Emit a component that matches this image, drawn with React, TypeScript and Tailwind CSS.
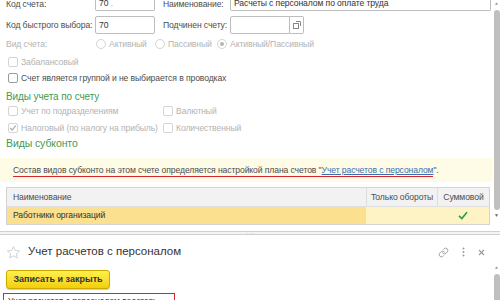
import React from 'react';

const Check = ({ checked = false, disabled = false }: { checked?: boolean; disabled?: boolean }) => (
  <span
    className={`flex h-[10px] w-[10px] shrink-0 items-center justify-center rounded-[2px] border bg-white ${
      disabled ? 'border-[#d4d4d4]' : 'border-[#9a9a9a]'
    }`}
  >
    {checked && (
      <svg width="8" height="8" viewBox="0 0 9 9">
        <path d="M1.5 4.5 L3.6 6.8 L7.6 1.8" fill="none" stroke="#a8a8a8" strokeWidth="1.3" />
      </svg>
    )}
  </span>
);

const Radio = ({ on = false }: { on?: boolean }) => (
  <span className="flex h-[10px] w-[10px] shrink-0 items-center justify-center rounded-full border border-[#d4d4d4] bg-white">
    {on && <span className="h-[4px] w-[4px] rounded-full bg-[#b5b5b5]" />}
  </span>
);

const App = () => {
  return (
    <div
      className="flex h-[300px] w-[500px] flex-col overflow-hidden whitespace-nowrap bg-white text-[8.6px] tracking-[-0.1px] text-[#4d4d4d]"
      style={{ fontFamily: '"Liberation Sans", Arial, sans-serif' }}
    >
      {/* Top pane */}
      <div className="flex h-[231px] shrink-0">
        <div className="flex w-[493px] flex-col">
          <div className="-mt-[3px] flex flex-col pl-[6px]">
            {/* Row 1 */}
            <div className="flex h-[14px] items-center">
              <span className="w-[89px]">Код счета:</span>
              <div className="flex h-full w-[60px] items-center rounded-b-[2px] border border-t-0 border-[#bdbdbd] px-[3px] text-[#333]">
                70<span className="text-[#bbb]">&nbsp;.</span>
              </div>
              <span className="ml-[8px] w-[67px]">Наименование:</span>
              <div className="flex h-full w-[261px] items-center rounded-b-[2px] border border-t-0 border-[#bdbdbd] px-[3px] text-[#333]">
                Расчеты с персоналом по оплате труда
              </div>
            </div>
            {/* Row 2 */}
            <div className="mt-[5px] flex h-[18px] items-center">
              <span className="w-[89px]">Код быстрого выбора:</span>
              <div className="flex h-full w-[60px] items-center rounded-[2px] border border-[#bdbdbd] px-[3px] text-[#333]">
                70
              </div>
              <span className="ml-[8px] w-[67px]">Подчинен счету:</span>
              <div className="flex h-full w-[60px] rounded-l-[2px] border border-[#bdbdbd]" />
              <div className="flex h-full w-[14px] items-center justify-center rounded-r-[2px] border border-l-0 border-[#bdbdbd]">
                <svg width="8" height="8" viewBox="0 0 8 8">
                  <rect x="0.5" y="2.5" width="5" height="5" fill="none" stroke="#888" />
                  <path d="M3 0.5 H7.5 V5" fill="none" stroke="#888" />
                </svg>
              </div>
            </div>
            {/* Row 3 */}
            <div className="mt-[3px] flex h-[14px] items-center text-[#b3b3b3]">
              <span className="w-[90px]">Вид счета:</span>
              <span className="flex w-[59px] items-center gap-[3px]">
                <Radio /> Активный
              </span>
              <span className="flex w-[62px] items-center gap-[3px]">
                <Radio /> Пассивный
              </span>
              <span className="flex items-center gap-[3px]">
                <Radio on /> Активный/Пассивный
              </span>
            </div>
            {/* Checkboxes */}
            <div className="mt-[4px] flex h-[14px] items-center gap-[3px] pl-[2px] text-[#b3b3b3]">
              <Check disabled /> Забалансовый
            </div>
            <div className="mt-[2px] flex h-[14px] items-center gap-[3px] pl-[2px] text-[#4d4d4d]">
              <Check /> Счет является группой и не выбирается в проводках
            </div>
            <div className="mt-[4px] flex h-[14px] items-center text-[10px] text-[#3f9a55]">Виды учета по счету</div>
            <div className="mt-[1px] flex h-[14px] items-center pl-[2px] text-[#b3b3b3]">
              <span className="flex w-[155px] items-center gap-[3px]">
                <Check disabled /> Учет по подразделениям
              </span>
              <span className="flex items-center gap-[3px]">
                <Check disabled /> Валютный
              </span>
            </div>
            <div className="mt-[3px] flex h-[14px] items-center pl-[2px] text-[#b3b3b3]">
              <span className="flex w-[155px] items-center gap-[3px]">
                <Check checked disabled /> Налоговый (по налогу на прибыль)
              </span>
              <span className="flex items-center gap-[3px]">
                <Check disabled /> Количественный
              </span>
            </div>
            <div className="mt-[2px] flex h-[14px] items-center text-[10.5px] text-[#3f9a55]">Виды субконто</div>
          </div>

          {/* Info banner */}
          <div className="mt-[7px] flex h-[24px] items-center bg-[#fefbe6] pl-[13px] pt-[1px] text-[#4d4d4d]">
            <span className="border-b-[1.5px] border-[#d4262b] leading-[11px]">
              Состав видов субконто на этом счете определяется настройкой плана счетов "
              <span className="text-[#3b6fb0] underline">Учет расчетов с персоналом</span>
            </span>
            <span>".</span>
          </div>

          {/* Table */}
          <div className="ml-[6px] mt-[5px] flex w-[484px] flex-col border border-[#d4d4d4]">
            <div className="flex h-[19px] border-b border-[#dedede] bg-[#f2f2f2]">
              <div className="flex flex-1 items-center pl-[6px]">Наименование</div>
              <div className="flex w-[71px] items-center justify-center border-l border-[#dedede]">Только обороты</div>
              <div className="flex w-[52px] items-center justify-center border-l border-[#dedede]">Суммовой</div>
            </div>
            <div className="flex h-[17px]">
              <div className="flex flex-1 items-center bg-[#fbe08f] pl-[6px] text-[#333]">Работники организаций</div>
              <div className="w-[71px] bg-[#fdf3c5]" />
              <div className="flex w-[52px] items-center justify-center bg-[#fdf3c5]">
                <svg width="10" height="9" viewBox="0 0 10 9">
                  <path d="M1 4.8 L3.8 7.5 L9 1.2" fill="none" stroke="#2e9a46" strokeWidth="1.6" />
                </svg>
              </div>
            </div>
          </div>
        </div>
        {/* scrollbar */}
        <div className="flex w-[7px] flex-col items-center">
          <span className="mt-[1px] text-[5px] leading-[5px] text-[#aaa]">▲</span>
          <div className="mt-[4px] h-[200px] w-[6px] rounded-[3px] bg-[#bfbfbf]" />
          <span className="mt-[3px] text-[5px] leading-[5px] text-[#666]">▼</span>
        </div>
      </div>

      {/* splitter */}
      <div className="relative h-[4px] shrink-0 border-b border-t border-[#d0d0d0] bg-[#f4f4f4]">
        <span className="absolute left-[246px] top-[-1px] text-[6px] leading-[4px] tracking-[1px] text-[#999]">···</span>
      </div>

      {/* Bottom pane */}
      <div className="flex flex-1">
        <div className="flex flex-1 flex-col pl-[6px]">
          <div className="mt-[7px] flex h-[20px] items-center">
            <svg width="15" height="15" viewBox="0 0 24 24" className="shrink-0">
              <path
                d="M12 2.5l2.9 6.2 6.8.7-5.1 4.6 1.5 6.7L12 17.3l-6.1 3.4 1.5-6.7-5.1-4.6 6.8-.7z"
                fill="none"
                stroke="#c8c8c8"
                strokeWidth="1.3"
                strokeLinejoin="round"
              />
            </svg>
            <span className="ml-[7px] text-[11.5px] tracking-normal text-[#333]">Учет расчетов с персоналом</span>
            <div className="ml-auto mr-[8px] flex items-center gap-[13px] text-[#999]">
              <svg width="11" height="11" viewBox="0 0 24 24" fill="none" stroke="#9a9a9a" strokeWidth="2" strokeLinecap="round">
                <path d="M10 13a5 5 0 0 0 7.5.5l3-3a5 5 0 0 0-7-7l-1.7 1.7" />
                <path d="M14 11a5 5 0 0 0-7.5-.5l-3 3a5 5 0 0 0 7 7l1.7-1.7" />
              </svg>
              <svg width="3" height="10" viewBox="0 0 3 10">
                <circle cx="1.5" cy="1.5" r="1" fill="#999" />
                <circle cx="1.5" cy="5" r="1" fill="#999" />
                <circle cx="1.5" cy="8.5" r="1" fill="#999" />
              </svg>
              <svg width="7" height="7" viewBox="0 0 7 7">
                <path d="M1 1 L6 6 M6 1 L1 6" stroke="#999" strokeWidth="1.1" />
              </svg>
            </div>
          </div>
          <div className="mt-[8px] flex h-[19px] w-[104px] items-center justify-center rounded-[3px] border border-[#c9a800] bg-gradient-to-b from-[#fff04a] to-[#f3cf00] text-[9px] font-bold tracking-normal text-[#333] shadow-[0_1px_1px_rgba(0,0,0,0.2)]">
            Записать и закрыть
          </div>
          <div className="-ml-[3px] mt-[4px] h-[20px] w-[172px] border-[1.5px] border-[#d4262b] px-[4px] pt-[1px] text-[#333]">
            Учет расчетов с персоналом ведется:
          </div>
        </div>
        <div className="flex w-[7px] flex-col items-center">
          <span className="mt-[30px] text-[5px] leading-[5px] text-[#aaa]">▲</span>
          <div className="mt-[4px] h-[60px] w-[6px] rounded-[3px] bg-[#bfbfbf]" />
        </div>
      </div>
    </div>
  );
};

export default App;
